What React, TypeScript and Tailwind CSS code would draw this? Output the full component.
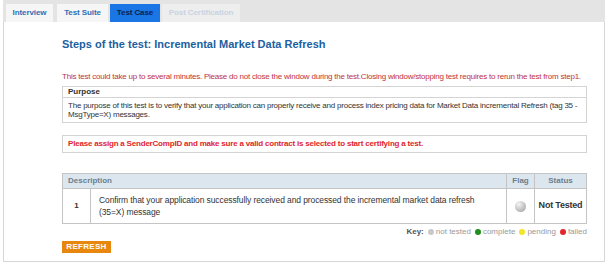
import React from 'react';

const tabs = [
  { label: 'Interview', state: 'idle', width: 'w-[47px]' },
  { label: 'Test Suite', state: 'idle', width: 'w-[51px]' },
  { label: 'Test Case', state: 'active', width: 'w-[50px]' },
  { label: 'Post Certification', state: 'disabled', width: 'w-[78px]' },
];

const keyItems = [
  { label: 'not tested', color: 'bg-[#c9c9c9]' },
  { label: 'complete', color: 'bg-[#1e8f1e]' },
  { label: 'pending', color: 'bg-[#f2e627]' },
  { label: 'failed', color: 'bg-[#e3262b]' },
];

export default function App() {
  return (
    <div className="w-[608px] h-[264px] bg-white font-['Liberation_Sans',Arial,sans-serif] overflow-hidden">
      <div className="mx-[3px] flex flex-col">
        {/* Tab strip */}
        <div className="h-[22px] bg-[#e4e4e4] flex items-end pl-[3px]">
          {tabs.map((t, i) => (
            <div
              key={t.label}
              className={`${t.width} ${i === 1 ? 'ml-[4px]' : i > 1 ? 'ml-[2px]' : ''} h-[18px] flex items-center justify-center text-[8px] font-bold tracking-[-0.1px] ${
                t.state === 'active'
                  ? 'bg-[#1976e4] text-[#0b2250]'
                  : t.state === 'disabled'
                  ? 'bg-[#eeeeee] text-[#c9d3e2]'
                  : 'bg-[#f6f6f6] text-[#2f6fb5]'
              }`}
            >
              {t.label}
            </div>
          ))}
        </div>

        {/* Content panel */}
        <div className="h-[240px] border border-t-0 border-[#d6d6d6] pl-[58px] pr-[12px]">
          <h1 className="mt-[16px] text-[11px] leading-[13px] font-bold text-[#20609f]">
            Steps of the test: Incremental Market Data Refresh
          </h1>

          <p className="mt-[21px] text-[8px] leading-[10px] tracking-[-0.22px] text-[#c0323c] whitespace-nowrap">
            This test could take up to several minutes. Please do not close the window during the test.Closing window/stopping test requires to rerun the test from step1.
          </p>

          <div className="mt-[4px] w-[525px] border border-[#d4d4d4]">
            <div className="h-[11px] px-[5px] flex items-center text-[8px] font-bold text-[#333] border-b border-[#d4d4d4]">
              Purpose
            </div>
            <div className="px-[5px] pt-[3px] pb-[3px] text-[8px] leading-[9px] tracking-[-0.22px] text-[#333]">
              The purpose of this test is to verify that your application can properly receive and process index pricing data for Market Data incremental Refresh (tag 35 -
              <br />
              MsgType=X) messages.
            </div>
          </div>

          <div className="mt-[12px] w-[525px] h-[18px] border border-[#d4d4d4] px-[5px] flex items-center text-[8px] font-bold tracking-[-0.2px] text-[#e0252b]">
            Please assign a SenderCompID and make sure a valid contract is selected to start certifying a test.
          </div>

          <table className="mt-[20px] w-[525px] border-collapse border border-[#c4c4c4] text-[#333]">
            <thead>
              <tr className="h-[15px] bg-[#dbe6ef] text-[8px] text-[#6c7f90]">
                <th colSpan={2} className="text-left pl-[5px] border border-[#c4c4c4] font-bold">Description</th>
                <th className="w-[28px] border border-[#c4c4c4] font-bold">Flag</th>
                <th className="w-[52px] border border-[#c4c4c4] font-bold">Status</th>
              </tr>
            </thead>
            <tbody>
              <tr className="h-[35px]">
                <td className="w-[28px] text-center text-[8px] font-bold border border-[#c4c4c4]">1</td>
                <td className="pl-[8px] text-[8.5px] leading-[12px] tracking-[-0.1px] border border-[#c4c4c4]">
                  Confirm that your application successfully received and processed the incremental market data refresh
                  <br />
                  (35=X) message
                </td>
                <td className="border border-[#c4c4c4]">
                  <div className="mx-auto w-[11px] h-[11px] rounded-full bg-[radial-gradient(circle_at_35%_30%,#f4f4f4,#9a9a9a)]" />
                </td>
                <td className="text-center text-[9px] font-bold tracking-[-0.2px] border border-[#c4c4c4]">Not Tested</td>
              </tr>
            </tbody>
          </table>

          <div className="mt-[2px] w-[525px] flex justify-end items-center gap-[4px] text-[8px] text-[#999]">
            <span className="font-bold text-[#555]">Key:</span>
            {keyItems.map((k) => (
              <span key={k.label} className="flex items-center gap-[2px]">
                <span className={`inline-block w-[6px] h-[6px] rounded-full ${k.color}`} />
                {k.label}
              </span>
            ))}
          </div>

          <button className="mt-[3px] h-[12px] w-[49px] justify-center bg-[#e8870d] text-white text-[8px] font-bold tracking-[0.3px] flex items-center">
            REFRESH
          </button>
        </div>
      </div>
    </div>
  );
}
